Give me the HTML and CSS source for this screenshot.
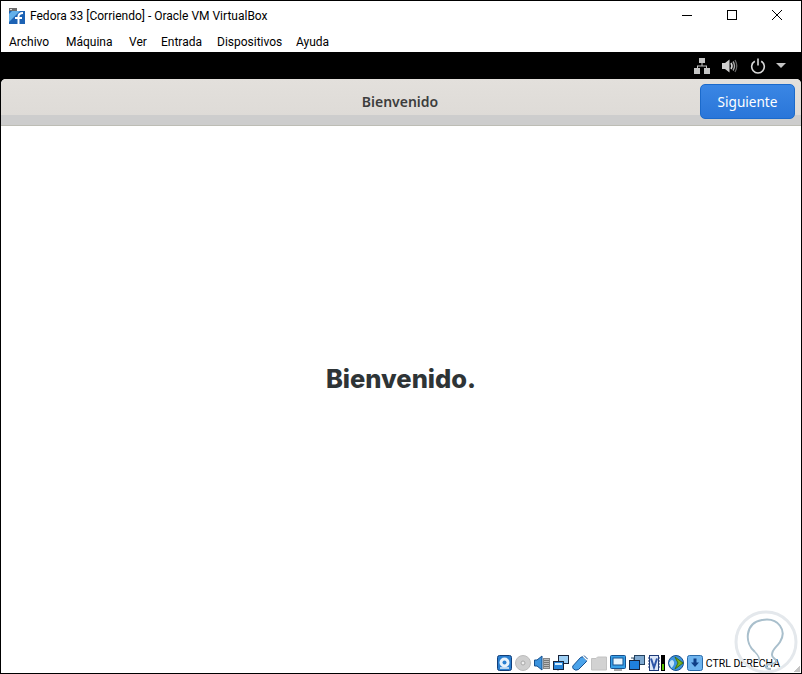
FILE: index.html
```html
<!DOCTYPE html>
<html lang="es">
<head>
  <meta charset="UTF-8" />
  <title>Fedora 33 [Corriendo] - Oracle VM VirtualBox</title>
  <link rel="stylesheet" href="styles.css">
</head>
<body>
  <div class="window">
    <div class="titlebar">
      <svg class="app-icon" width="16" height="16" viewBox="0 0 16 16">
        <rect x="0" y="0" width="8" height="4" fill="#6b6b6b"/>
        <rect x="1" y="1" width="2" height="1" fill="#ddd"/>
        <rect x="8" y="0" width="8" height="3" fill="#fff"/>
        <rect x="0" y="3" width="16" height="13" fill="#1c62b4"/>
        <path d="M0 14 L11 3 H3 L0 6Z" fill="#62b0ea"/>
        <path d="M9.500 16 V8.500 Q9.500 5 14 5 M6 10 H13" fill="none" stroke="#fff" stroke-width="2"/>
      </svg>
      <span class="title">Fedora 33 [Corriendo] - Oracle VM VirtualBox</span>
      <div class="win-buttons">
        <div class="win-btn"><svg width="12" height="12" viewBox="0 0 12 12"><path d="M1 6.500H11" stroke="#000"/></svg></div>
        <div class="win-btn"><svg width="12" height="12" viewBox="0 0 12 12"><rect x="1.500" y="1.500" width="9" height="9" fill="none" stroke="#000"/></svg></div>
        <div class="win-btn"><svg width="12" height="12" viewBox="0 0 12 12"><path d="M1 1L11 11M11 1L1 11" stroke="#000" fill="none"/></svg></div>
      </div>
    </div>

    <ul class="menubar">
      <li>Archivo</li>
      <li>Máquina</li>
      <li>Ver</li>
      <li>Entrada</li>
      <li>Dispositivos</li>
      <li>Ayuda</li>
    </ul>

    <div class="vm">
      <div class="topbar">
        <svg width="16" height="16" viewBox="0 0 16 16" fill="#c4c4c4">
          <rect x="5" y="0" width="6" height="5"/>
          <rect x="0" y="10" width="6" height="6"/>
          <rect x="10" y="10" width="6" height="6"/>
          <path d="M7.500 5h1v2.500H13V10h-1V8.500H4V10H3V7.500h4.500z"/>
        </svg>
        <svg class="sound" width="16" height="16" viewBox="0 0 16 16">
          <path d="M0 5H3L7.500 1.500V14.500L3 11H0Z" fill="#cfcfcf"/>
          <path d="M9 5Q11 8 9 11" fill="none" stroke="#d4d4d4" stroke-width="1.600"/>
          <path d="M11 3.500Q14 8 11 12.500" fill="none" stroke="#a8a8a8" stroke-width="1.400"/>
          <path d="M13 2Q16.500 8 13 14" fill="none" stroke="#666" stroke-width="1.300"/>
        </svg>
        <svg class="power" width="16" height="16" viewBox="0 0 16 16" fill="none" stroke="#d8d8d8" stroke-width="1.600">
          <path d="M4.800 3.300A6.300 6.300 0 1 0 11.200 3.300"/>
          <path d="M8 0.500V7.500"/>
        </svg>
        <div class="caret"></div>
      </div>

      <div class="gnome">
        <div class="headerbar">
          <div class="header-main">
            <span class="header-title">Bienvenido</span>
          </div>
          <button class="next-btn">Siguiente</button>
        </div>
        <div class="page">
          <h1>Bienvenido.</h1>
        </div>
      </div>
    </div>

    <div class="statusbar">
      <svg width="16" height="16" viewBox="0 0 16 16"><rect x="1.500" y=".5" width="14" height="15" rx="2" fill="#2a7fd0" stroke="#123f7a"/><circle cx="8.500" cy="7.500" r="5" fill="#e8f2fb"/><circle cx="8.500" cy="7.500" r="2" fill="#2a7fd0"/><path d="M4 13H13" stroke="#e8f2fb" stroke-width="1.500"/></svg>
      <svg width="16" height="16" viewBox="0 0 16 16"><circle cx="8" cy="8" r="7.500" fill="#cfcfcf" stroke="#bcbcbc"/><circle cx="8" cy="8" r="2" fill="#eee" stroke="#aaa"/></svg>
      <svg width="16" height="16" viewBox="0 0 16 16"><path d="M.5 5H3L8 1V15L3 11H.5Z" fill="#3b93de" stroke="#14508f"/><rect x="9.500" y="3.500" width="6" height="10" fill="#bbb" stroke="#888"/><path d="M10 5.500H15M10 7.500H15M10 9.500H15M10 11.500H15" stroke="#777"/></svg>
      <svg width="16" height="16" viewBox="0 0 16 16"><rect x="5.500" y=".5" width="10" height="8" fill="#9fd0f5" stroke="#17233a"/><rect x=".5" y="6.500" width="10" height="8" fill="#2a85d8" stroke="#17233a"/><rect x="2" y="8" width="7" height="2" fill="#d5ecfb"/><path d="M5 14.500V15.500" stroke="#17233a"/></svg>
      <svg width="16" height="16" viewBox="0 0 16 16"><path d="M.8 11L8.500 2.500Q10 1.500 11.500 2L14.500 5Q15 6 14 7L6.500 14.500Q3.500 16 1.500 14Q.3 13 .8 11Z" fill="#4ba3ea" stroke="#17508f"/><path d="M11.500 1L15.500 5" stroke="#fff" stroke-width="2"/><path d="M12 .5L15.800 4.300" stroke="#17508f"/></svg>
      <svg width="16" height="16" viewBox="0 0 16 16"><path d="M.5 3.500H5L6.500 2H15.500V15H.5Z" fill="#d2d2d2" stroke="#c2c2c2"/></svg>
      <svg width="16" height="16" viewBox="0 0 16 16"><rect x=".5" y=".5" width="15" height="13" rx="1" fill="#38a0e8" stroke="#14508f"/><rect x="3" y="3" width="10" height="7" fill="#e6f4fd" stroke="#14508f"/><path d="M4 15H12" stroke="#555"/></svg>
      <svg width="16" height="16" viewBox="0 0 16 16"><rect x="5.500" y=".5" width="10" height="9" fill="#7fa9d0" stroke="#24425f"/><rect x=".5" y="5.500" width="10" height="9" fill="#1f80dc" stroke="#17233a"/><path d="M2 3H5V5" fill="none" stroke="#24425f"/></svg>
      <div class="vt-group">
        <svg width="12" height="16" viewBox="0 0 12 16"><rect x="1.500" y=".5" width="9" height="15" fill="#dbe6f7" stroke="#1e3a78"/><path d="M0 3H2M0 6H2M0 9H2M0 12H2M10 3H12M10 6H12M10 9H12M10 12H12" stroke="#1e3a78"/><path d="M3 3.500L6 12.500L9 3.500" fill="none" stroke="#2c54a8" stroke-width="2"/></svg>
        <div class="meter"><div class="meter-fill"></div></div>
      </div>
      <svg width="16" height="16" viewBox="0 0 16 16"><circle cx="8" cy="8" r="7.500" fill="#3b93de" stroke="#17508f"/><path d="M1 8Q3.500 3 5.500 6T3.500 13" fill="#bfe0f6"/><path d="M7 2L15 8L7 14L10 8Z" fill="#7ab51d" stroke="#3f6f10"/></svg>
      <svg width="16" height="16" viewBox="0 0 16 16"><rect x=".5" y=".5" width="15" height="15" rx="2" fill="#6fb4ee" stroke="#2b6cab"/><path d="M6.500 3.500H9.500V7.500H12L8 12L4 7.500H6.500Z" fill="#0f3f86"/></svg>
      <span class="hostkey">CTRL DERECHA</span>
    </div>

    <div class="grip"></div>

    <svg class="watermark" width="70" height="66" viewBox="0 0 70 66" fill="none">
      <circle cx="35" cy="35" r="30" stroke="#e4e8ec" stroke-width="3"/>
      <path d="M24 45C13 36 14 16 31 13C48 10 56 24 49 35C45 41 41 42 41 48C41 52 47 52 45 55C43 58 37 56 35 59C34 61 37 62 40 62" stroke="#a9bfcc" stroke-width="2"/>
      <path d="M24 45C28 49 29 51 28 54" stroke="#a9bfcc" stroke-width="1.500"/>
    </svg>
  </div>
</body>
</html>
```

FILE: styles.css
```css
* {
  box-sizing: border-box;
}

html, body {
  margin: 0;
  padding: 0;
}

body {
  width: 802px;
  height: 674px;
  overflow: hidden;
  font-family: Roboto, "Open Sans", sans-serif;
}

.window {
  position: relative;
  width: 802px;
  height: 674px;
  display: flex;
  flex-direction: column;
  background: #fff;
  border: 1px solid #000;
}

/* barra de titulo */
.titlebar {
  height: 29px;
  display: flex;
  align-items: center;
  padding-left: 8px;
  flex: none;
}

.app-icon {
  margin-right: 5px;
}

.title {
  font-size: 12px;
  color: #000;
}

.win-buttons {
  margin-left: auto;
  display: flex;
  padding-right: 2px;
  padding-bottom: 2px;
}

.win-btn {
  width: 45px;
  height: 27px;
  display: flex;
  align-items: center;
  justify-content: center;
}

/* menu */
.menubar {
  list-style: none;
  margin: 0;
  padding: 2px 0 0 8px;
  height: 22px;
  display: grid;
  grid-template-columns: 41px 47px 16px 40px 63px 34px;
  gap: 16px;
  align-items: center;
  font-size: 12px;
  color: #000;
  white-space: nowrap;
  flex: none;
}

/* maquina virtual */
.vm {
  flex: 1;
  display: flex;
  flex-direction: column;
  background: #000;
  min-height: 0;
}

.topbar {
  height: 27px;
  flex: none;
  display: flex;
  align-items: center;
  justify-content: flex-end;
  padding-right: 15px;
}

.sound {
  margin-left: 12px;
}

.power {
  margin-left: 12px;
}

.caret {
  margin-left: 10px;
  width: 0;
  height: 0;
  border-left: 5px solid transparent;
  border-right: 5px solid transparent;
  border-top: 5px solid #c4c4c4;
}

.gnome {
  flex: 1;
  display: flex;
  flex-direction: column;
  background: #fff;
  border-radius: 5px 5px 0 0;
  overflow: hidden;
}

.headerbar {
  position: relative;
  height: 47px;
  flex: none;
  background: #cdcdcd;
  border-bottom: 1px solid #bdbdb5;
}

.header-main {
  height: 36px;
  display: flex;
  align-items: center;
  justify-content: center;
  background: linear-gradient(#e3e0dc, #dedbd7);
  padding: 9px 2px 0 0;
}

.header-title {
  font-family: "Noto Sans", sans-serif;
  font-size: 14px;
  font-weight: 600;
  color: #3d3d3d;
}

.next-btn {
  position: absolute;
  top: 5px;
  right: 6px;
  width: 95px;
  height: 35px;
  border: 1px solid #1b6acb;
  border-radius: 5px;
  background: linear-gradient(#3a86e4, #2a76d9);
  color: #fff;
  font-family: "Noto Sans", sans-serif;
  font-size: 13.600px;
  padding: 0;
}

.page {
  flex: 1;
  display: flex;
  align-items: center;
  justify-content: center;
  padding-bottom: 24px;
}

.page h1 {
  margin: 0;
  font-family: Inter, sans-serif;
  font-size: 25.500px;
  font-weight: 800;
  color: #2e3436;
}

/* barra de estado */
.statusbar {
  height: 19px;
  flex: none;
  display: flex;
  align-items: center;
  justify-content: flex-end;
  gap: 3px;
  padding: 0 21px 1px 0;
  background: #fff;
}

.vt-group {
  display: flex;
  gap: 1px;
}

.meter {
  width: 4px;
  height: 16px;
  background: #000;
  padding: 1px;
  display: flex;
  align-items: flex-end;
}

.meter-fill {
  width: 100%;
  height: 6px;
  background: #55c400;
}

.hostkey {
  font-size: 10.500px;
  color: #000;
}

.grip {
  position: absolute;
  right: 1px;
  bottom: 1px;
  width: 7px;
  height: 7px;
  background: linear-gradient(135deg, transparent 50%, #c4c4c4 50%);
}

/* marca de agua */
.watermark {
  position: absolute;
  right: 0;
  bottom: 0;
  pointer-events: none;
}
```
